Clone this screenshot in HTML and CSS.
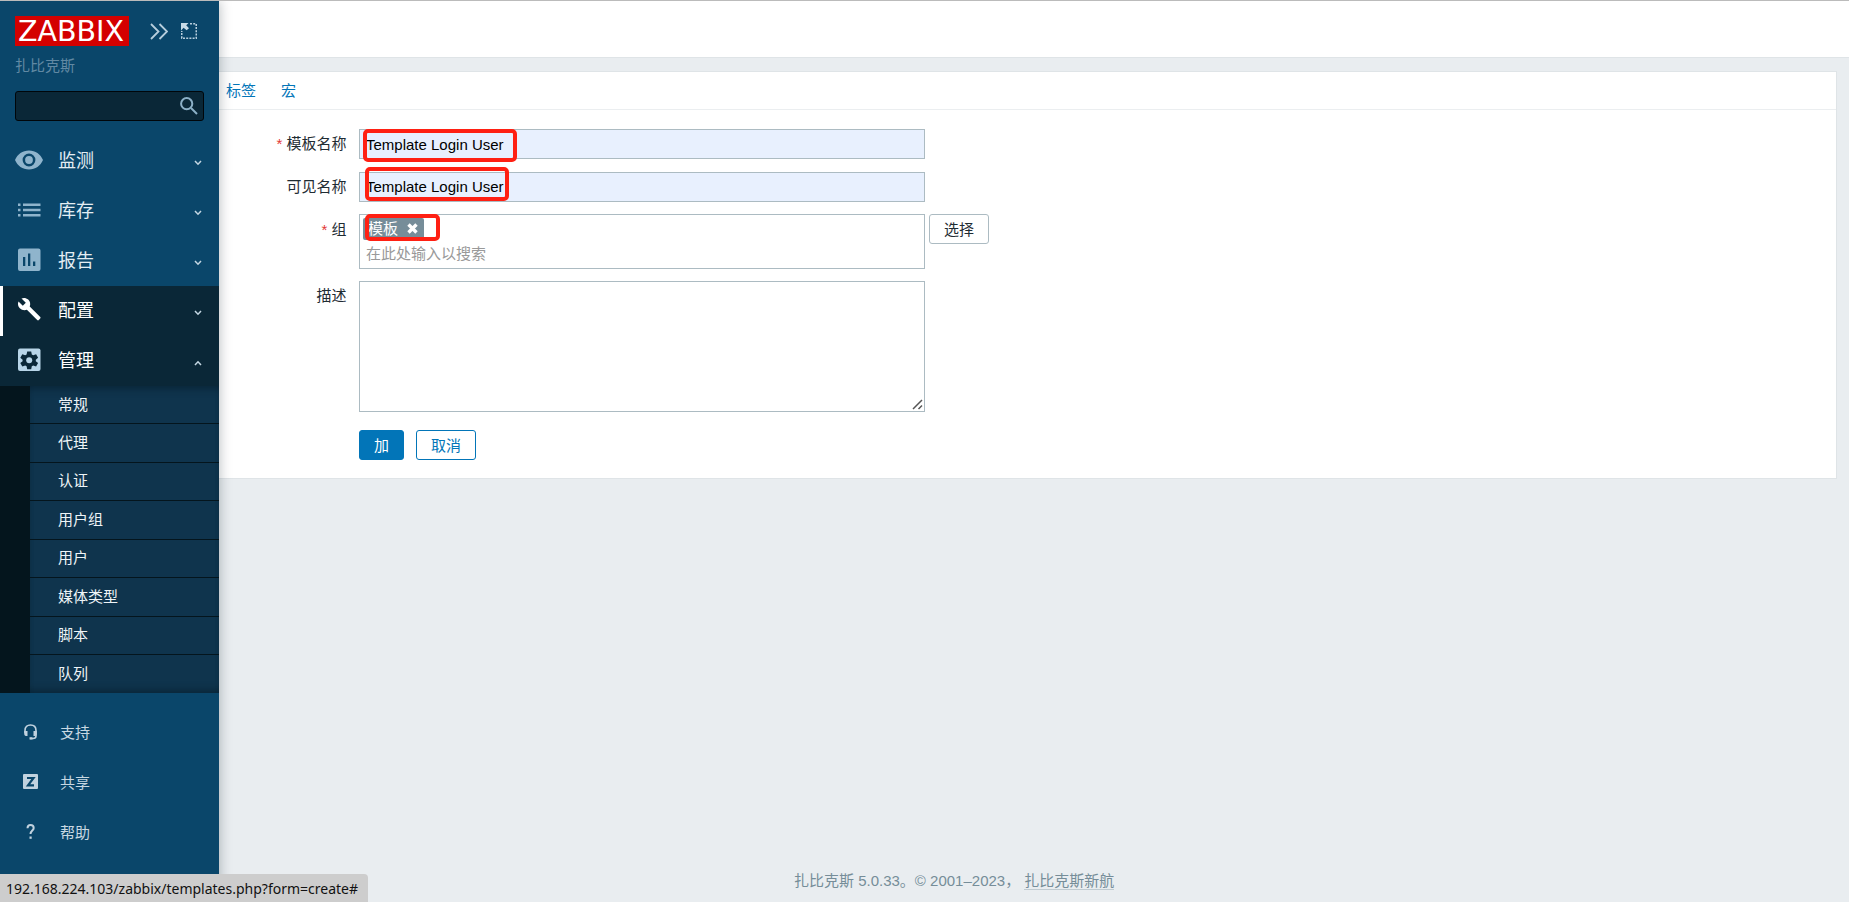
FILE: index.html
```
<!DOCTYPE html>
<html lang="zh-CN">
<head>
<meta charset="UTF-8">
<title>配置模板</title>
<link rel="stylesheet" href="styles.css">
</head>
<body>

<aside class="sidebar">
	<div class="sidebar-header">
		<div class="logo">ZABBIX</div>
		<svg class="icon-compact" width="18" height="17" viewBox="0 0 18 17"><path d="M1 1l7.500 7.500L1 16M9.500 1L17 8.500 9.500 16"/></svg>
		<svg class="icon-kiosk" width="16" height="16" viewBox="0 0 16 16"><path class="dash" d="M9 .75h6.250v14.500H.75V8"/><path class="arrow" d="M0 0h7.500L5.200 2.300 8 5.200 5.600 7.300 2.600 4.700 0 7.500z"/></svg>
	</div>
	<div class="server-name">扎比克斯</div>
	<div class="search">
		<svg width="18" height="18" viewBox="0 0 18 18"><circle cx="6.700" cy="6.700" r="5.600"/><path d="M11 11l6 6"/></svg>
	</div>

	<ul class="menu-main">
		<li><a>
			<svg class="icon" width="28" height="28" viewBox="0 0 28 28"><path fill-rule="evenodd" d="M14 4.500C7.500 4.500 2.500 8.300 0 14c2.500 5.700 7.500 9.500 14 9.500S25.500 19.700 28 14C25.500 8.300 20.500 4.500 14 4.500zm0 3.100a6.400 6.400 0 1 1 0 12.800 6.400 6.400 0 0 1 0-12.800z"/><circle cx="14" cy="14" r="3.900"/></svg>
			<span>监测</span><svg class="arrow" width="8" height="6" viewBox="0 0 8 6"><path d="M1 1l3 3.200L7 1"/></svg></a></li>
		<li><a>
			<svg class="icon" width="28" height="28" viewBox="0 0 28 28"><path d="M3 7.500h2.500V10H3zM8 7.500h17.500V10H8zM3 12.800h2.500v2.500H3zM8 12.800h17.500v2.500H8zM3 18h2.500v2.500H3zM8 18h17.500v2.500H8z"/></svg>
			<span>库存</span><svg class="arrow" width="8" height="6" viewBox="0 0 8 6"><path d="M1 1l3 3.200L7 1"/></svg></a></li>
		<li><a>
			<svg class="icon" width="28" height="28" viewBox="0 0 28 28"><path fill-rule="evenodd" d="M5 2.500h18.500a2 2 0 0 1 2 2V23a2 2 0 0 1-2 2H5a2 2 0 0 1-2-2V4.500a2 2 0 0 1 2-2zM8 11v9h2.300v-9zM13 7.500V20h2.300V7.500zM18 15.500V20h2.300v-4.500z"/></svg>
			<span>报告</span><svg class="arrow" width="8" height="6" viewBox="0 0 8 6"><path d="M1 1l3 3.200L7 1"/></svg></a></li>
		<li class="selected"><a>
			<svg class="icon" width="28" height="28" viewBox="0 0 28 28"><path d="M25 20.800L14.700 10.600c1-2.500.5-5.200-1.500-7.100-1.900-1.700-4.600-2-6.700-1.100l4.300 4.300-3 3-4.300-4.300c-1 2.200-.6 4.900 1.300 6.900 1.900 1.900 4.700 2.400 7.100 1.500L22.200 24c.5.500 1.200.5 1.600 0l1.400-1.500c.5-.5.400-1.300-.2-1.700z"/></svg>
			<span>配置</span><svg class="arrow" width="8" height="6" viewBox="0 0 8 6"><path d="M1 1l3 3.200L7 1"/></svg></a></li>
		<li class="open"><a>
			<svg class="icon" width="28" height="28" viewBox="0 0 28 28"><rect x="3" y="2.500" width="22.500" height="22.500" rx="2"/><g class="gear"><path d="M12.200 5.500h4l.6 3 1.400.8 2.900-1.100 2 3.500-2.300 2v1.500l2.300 1.900-2 3.400-2.900-1-1.400.8-.6 2.900h-4l-.6-2.900-1.400-.8-2.900 1-2-3.400 2.300-1.900v-1.500l-2.300-2 2-3.500 2.900 1.100 1.400-.8z"/></g><circle cx="14.200" cy="14.200" r="3"/></svg>
			<span>管理</span><svg class="arrow" width="8" height="6" viewBox="0 0 8 6"><path d="M1 5l3-3.200L7 5"/></svg></a>
			<ul class="submenu">
				<li>常规</li>
				<li>代理</li>
				<li>认证</li>
				<li>用户组</li>
				<li>用户</li>
				<li>媒体类型</li>
				<li>脚本</li>
				<li>队列</li>
			</ul>
		</li>
	</ul>

	<ul class="menu-user">
		<li><svg width="16" height="16" viewBox="0 0 16 16"><path class="line" d="M2 9V6.500C2 3 4.300 1 7.500 1S13 3 13 6.500V12c0 1.500-1.300 2.500-3 2.500H7"/><path d="M1.200 7H4.500v5H2.700Q1.200 11.500 1.200 10zM13.800 7H10.500v5h1.800q1.500-.5 1.500-2zM6.500 13.200h3v2.300h-3z"/></svg><span>支持</span></li>
		<li><svg width="16" height="16" viewBox="0 0 16 16"><path d="M1 0h13q1 0 1 1v13q0 1-1 1H1q-1 0-1-1V1q0-1 1-1z"/><path class="cut" d="M4 4h6.500L5 11.300h6"/></svg><span>共享</span></li>
		<li><svg width="16" height="16" viewBox="0 0 16 16"><path class="line q" d="M4.500 4.200C4.600 2 5.800 1 7.500 1s3.200 1 3.200 2.900C10.700 6.500 7.500 6.500 7.500 10"/><path d="M6.500 12.500h2.200v2.300H6.500z"/></svg><span>帮助</span></li>
		<li><svg width="16" height="16" viewBox="0 0 16 16"><circle cx="7.500" cy="3.500" r="3.500"/><path d="M0 15q0-5 7.500-5t7.500 5z"/></svg></li>
	</ul>
</aside>

<div class="wrapper">
	<header class="page-title"></header>
	<main class="form-panel">
		<nav class="tabs"><a>标签</a><a>宏</a></nav>
		<form class="form-grid">
			<label class="required">模板名称</label>
			<div class="field">
				<input type="text" value="Template Login User">
				<i class="mark mark-name"></i>
			</div>

			<label>可见名称</label>
			<div class="field">
				<input type="text" class="visible-name" value="Template Login User">
				<i class="mark mark-visible"></i>
			</div>

			<label class="required">组</label>
			<div class="field field-group">
				<div class="multiselect">
					<span class="tag">模板<svg width="11" height="11" viewBox="0 0 11 11"><path d="M1.500 1.500l8 8M9.500 1.500l-8 8"/></svg></span>
					<span class="placeholder">在此处输入以搜索</span>
				</div>
				<button type="button" class="btn-grey">选择</button>
				<i class="mark mark-group"></i>
			</div>

			<label>描述</label>
			<div class="field">
				<div class="textarea"><svg width="11" height="11" viewBox="0 0 11 11"><path d="M1 10L10 1M6.500 10L10 6.500"/></svg></div>
			</div>

			<div class="buttons">
				<button type="button">加</button>
				<button type="button" class="btn-alt">取消</button>
			</div>
		</form>
	</main>
	<footer>扎比克斯 5.0.33。© 2001–2023， <a>扎比克斯新航</a></footer>
</div>

<div class="browser-status">192.168.224.103/zabbix/templates.php?form=create#</div>

</body>
</html>
```

FILE: styles.css
```
* {
	box-sizing: border-box;
}

body {
	display: flex;
	height: 902px;
	margin: 0;
	overflow: hidden;
	border-top: 1px solid #bbb;
	background-color: #e9edf0;
	color: #1f2c33;
	font: 15px/20px "Liberation Sans", "Noto Sans CJK SC", sans-serif;
}

ul {
	margin: 0;
	padding: 0;
	list-style: none;
}

/* sidebar */

.sidebar {
	position: relative;
	z-index: 2;
	flex: 0 0 219px;
	height: 901px;
	background-color: #0a466a;
	box-shadow: 0 0 12px rgba(0, 20, 30, .3);
}

.sidebar-header {
	display: flex;
	align-items: flex-start;
	height: 54px;
	padding: 15px 0 0 15px;
}

.logo {
	width: 114px;
	height: 30px;
	padding-left: 3px;
	background-color: #d40000;
	color: #fff;
	font: 28.5px/32px "DejaVu Sans", sans-serif;
}

.icon-compact {
	margin: 7px 0 0 21px;
	fill: none;
	stroke: #b7cedd;
	stroke-width: 1.8;
}

.icon-kiosk {
	margin: 7px 0 0 13px;
}

.icon-kiosk .dash {
	fill: none;
	stroke: #b7cedd;
	stroke-width: 1.5;
	stroke-dasharray: 2 1.2;
}

.icon-kiosk .arrow {
	fill: #c8dbe7;
}

.server-name {
	height: 36px;
	padding: 1px 0 0 15px;
	color: #6189a3;
}

.search {
	display: flex;
	align-items: center;
	justify-content: flex-end;
	width: 189px;
	height: 30px;
	margin-left: 15px;
	padding-right: 5px;
	border: 1px solid #00060a;
	border-radius: 3px;
	background-color: #0a2737;
}

.search svg {
	fill: none;
	stroke: #8cb0c7;
	stroke-width: 2;
}

.menu-main {
	margin-top: 15px;
}

.menu-main a {
	display: flex;
	align-items: center;
	height: 50px;
	padding: 0 17px 2px 15px;
	color: #e3edf3;
	font-size: 18px;
}

.menu-main .icon {
	margin-right: 15px;
	fill: #8fb4cc;
}

.menu-main span {
	flex: 1;
	padding-top: 1px;
}

.menu-main .arrow {
	margin-top: 5px;
	fill: none;
	stroke: #c3d6e2;
	stroke-width: 1.5;
}

.menu-main .selected,
.menu-main .open {
	background-color: #0a2737;
}

.menu-main .selected a {
	padding-left: 12px;
	border-left: 3px solid #fff;
	color: #fff;
}

.menu-main .selected .icon {
	fill: #fff;
}

.menu-main .open a {
	color: #fff;
}

.menu-main .open .icon {
	fill: #b8d5e8;
}

.menu-main .open .gear {
	fill: #0a2737;
}

.submenu {
	height: 307px;
	border-left: 30px solid #04151d;
	background-color: #0f344d;
	box-shadow: inset 0 8px 8px -6px rgba(0, 20, 30, .5), inset 0 -8px 8px -6px rgba(0, 20, 30, .5);
}

.submenu li {
	height: 38.45px;
	padding: 8.6px 0 0 28px;
	border-bottom: 1px solid #04151d;
	color: #eef4f7;
}

.submenu li:last-child {
	border-bottom: 0;
}

.menu-user {
	height: 181px;
	margin-top: 13px;
	overflow: hidden;
}

.menu-user li {
	display: flex;
	align-items: center;
	height: 50px;
	padding-left: 23px;
	color: #c8d8e2;
}

.menu-user svg {
	margin: 1px 21px 0 0;
	fill: #c1d2df;
}

.menu-user span {
	padding-top: 3px;
}

.menu-user .line {
	fill: none;
	stroke: #c1d2df;
	stroke-width: 1.6;
}

.menu-user .q {
	stroke-width: 2;
}

.menu-user .cut {
	fill: none;
	stroke: #0a466a;
	stroke-width: 2.2;
}

/* content */

.wrapper {
	display: flex;
	flex: 1;
	flex-direction: column;
	height: 901px;
}

.page-title {
	height: 57px;
	border-bottom: 1px solid #dfe4e7;
	background-color: #fff;
}

.form-panel {
	height: 408px;
	margin: 13px 12px 0 0;
	border: 1px solid #dfe4e7;
	border-left: 0;
	background-color: #fff;
}

.tabs {
	display: flex;
	gap: 25px;
	height: 38px;
	padding: 9px 0 0 7px;
	border-bottom: 1px solid #ebeef0;
	color: #0275b8;
}

.form-grid {
	display: grid;
	grid-template-columns: 128px 1fr;
	grid-template-rows: 30px 30px 53px 131px 30px;
	column-gap: 12px;
	row-gap: 13px;
	padding-top: 19px;
}

.form-grid label {
	padding: 5px .5px 0 0;
	text-align: right;
}

.required::before {
	content: "* ";
	color: #e33734;
}

.field {
	position: relative;
}

.field input {
	display: block;
	width: 566px;
	height: 30px;
	padding: 1px 7px 0 6px;
	border: 1px solid #acbbc2;
	background-color: #e8f0fe;
	color: #000;
	font: 15px "Liberation Sans", sans-serif;
}

.field .visible-name {
	padding-top: 0;
	padding-bottom: 1px;
}

.field-group {
	display: flex;
	align-items: flex-start;
	gap: 4px;
	margin-top: -1px;
}

.multiselect {
	width: 566px;
	height: 55px;
	padding: 3px;
	border: 1px solid #acbbc2;
}

.tag {
	display: flex;
	align-items: center;
	width: 61px;
	height: 22px;
	padding-left: 5px;
	border-radius: 2px;
	background-color: #768d99;
	color: #fff;
}

.tag svg {
	margin: -2px 0 0 9px;
	stroke: #fff;
	stroke-width: 3.4;
}

.placeholder {
	display: block;
	padding: 4px 0 0 3px;
	color: #999;
}

.textarea {
	display: flex;
	align-items: flex-end;
	justify-content: flex-end;
	width: 566px;
	height: 131px;
	padding: 1px;
	border: 1px solid #acbbc2;
}

.textarea svg {
	stroke: #555;
	stroke-width: 1.5;
}

button {
	height: 30px;
	padding: 1px 14px 0;
	border: 1px solid #0275b8;
	border-radius: 3px;
	background-color: #0275b8;
	color: #fff;
	font: inherit;
}

.btn-grey {
	border-color: #acbbc2;
	background-color: #fff;
	color: #1f2c33;
}

.btn-alt {
	background-color: #fff;
	color: #0275b8;
}

.buttons {
	display: flex;
	grid-column: 2;
	gap: 12px;
	margin-top: 5px;
	height: 30px;
}

/* red highlight frames over the fields */

.mark {
	position: absolute;
	border: 4px solid #ff2013;
	border-radius: 5px;
}

.mark-name {
	left: 4px;
	top: 0;
	width: 154px;
	height: 33px;
}

.mark-visible {
	left: 6px;
	top: -5px;
	width: 144px;
	height: 34px;
}

.mark-group {
	left: 6px;
	top: 0;
	width: 75px;
	height: 27px;
}

footer {
	margin-top: auto;
	padding: 0 0 11px 575px;
	color: #768d99;
	white-space: pre;
}

footer a {
	display: inline-block;
	height: 19px;
	border-bottom: 1px solid #c0cbd1;
}

.browser-status {
	position: absolute;
	left: 0;
	bottom: 0;
	z-index: 3;
	width: 368px;
	height: 28px;
	padding: 5px 0 0 6px;
	border-top-right-radius: 4px;
	background-color: #cdcdcd;
	color: #111;
	font: 14px/20px "Noto Sans", sans-serif;
	white-space: nowrap;
}
```
